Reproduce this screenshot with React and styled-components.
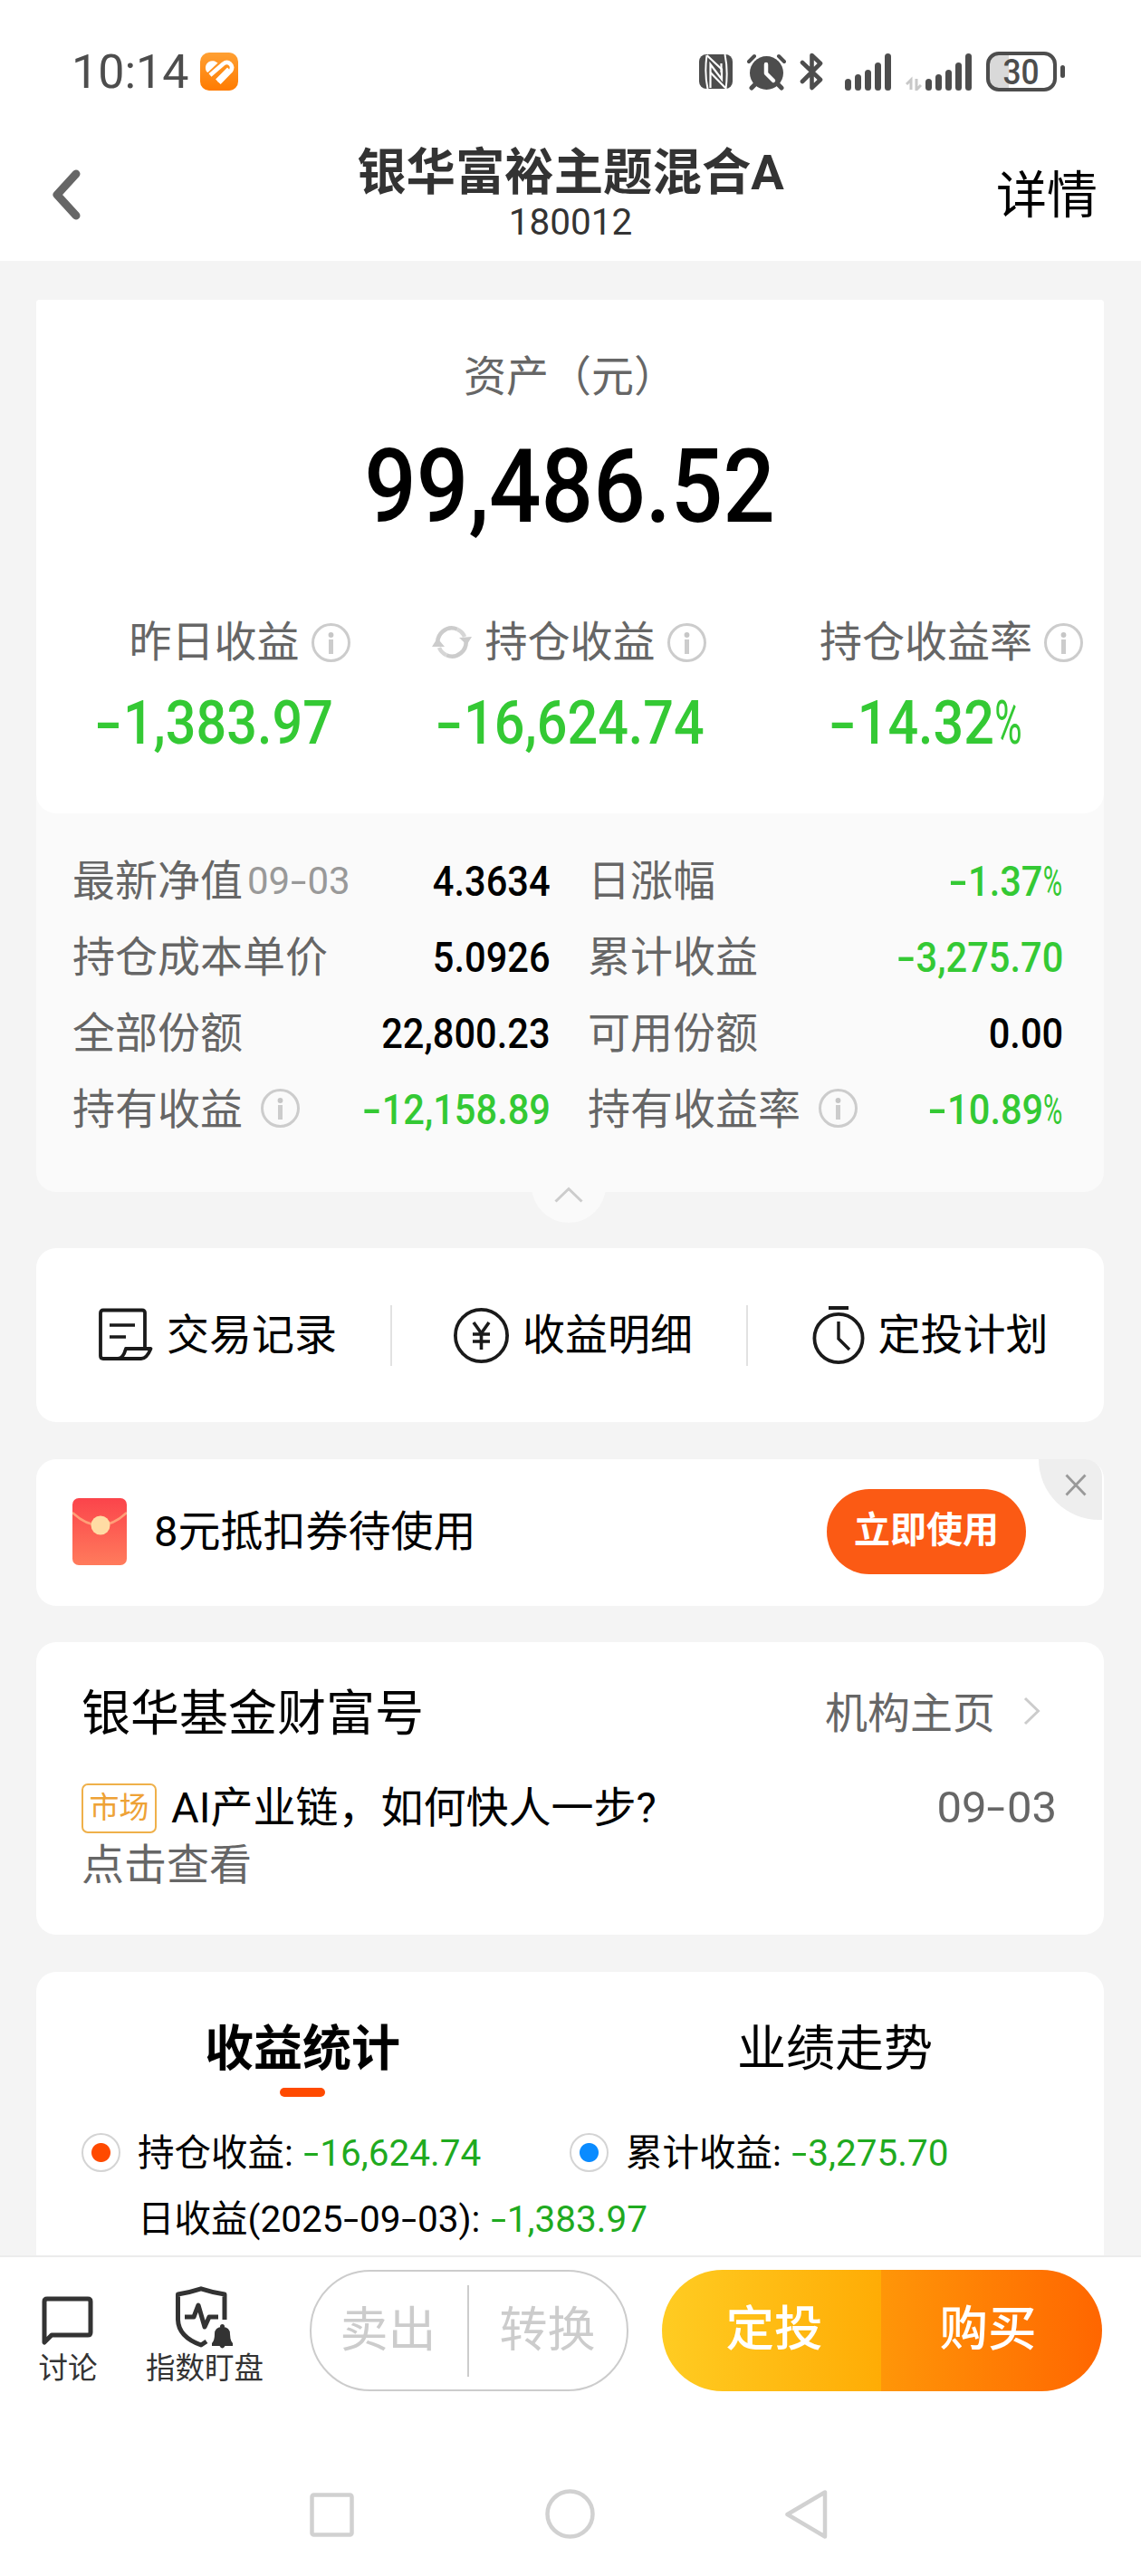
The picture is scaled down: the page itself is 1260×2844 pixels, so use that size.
import React from "react";
import styled, { createGlobalStyle } from "styled-components";

const GREEN = "#34c934";

const GlobalStyle = createGlobalStyle`
  * { box-sizing: border-box; }
  body {
    margin: 0;
    background: #f4f4f4;
    font-family: Roboto, "Noto Sans CJK SC", sans-serif;
    color: #000;
  }
  svg { display: block; flex: none; }
`;

const Phone = styled.div`
  width: 1260px;
  height: 2844px;
  display: flex;
  flex-direction: column;
  background: #f4f4f4;
  overflow: hidden;
`;

/* ---------- status bar and title ---------- */
const Header = styled.header`
  height: 288px;
  flex: none;
  background: #fff;
`;
const StatusBar = styled.div`
  height: 158px;
  padding: 0 84px 0 79px;
  display: flex;
  align-items: center;
  justify-content: space-between;
  color: #4d4d4d;
`;
const Clock = styled.div`
  display: flex;
  align-items: center;
  gap: 12px;
  font-size: 52px;
  line-height: 60px;
`;
const Time = styled.span`
  width: 130px;
  padding-top: 2px;
`;
const StatusIcons = styled.div`
  display: flex;
  align-items: center;
  height: 44px;
`;
const Gap = styled.span`
  width: ${(p) => p.$w}px;
  flex: none;
`;
const Battery = styled.div`
  width: 78px;
  height: 44px;
  border: 4px solid #4d4d4d;
  border-radius: 14px;
  background: linear-gradient(90deg, #d9d9d9 0 21px, #fff 21px);
  font-size: 38px;
  font-weight: 500;
  line-height: 38px;
  text-align: center;
`;
const BatteryTip = styled.span`
  width: 5px;
  height: 14px;
  margin-left: 4px;
  border-radius: 3px;
  background: #4d4d4d;
`;
const TitleBar = styled.div`
  height: 130px;
  padding: 0 48px;
  display: grid;
  grid-template-columns: 120px 1fr 120px;
  align-items: start;
`;
const TitleBlock = styled.div`
  padding-top: 3px;
  text-align: center;
  color: #333;
`;
const Title = styled.h1`
  margin: 0;
  font-size: 54.4px;
  line-height: 60px;
  font-weight: 700;
  white-space: nowrap;
`;
const Code = styled.div`
  font-size: 40.5px;
  line-height: 48px;
`;
const BackIcon = styled.div`
  padding: 29px 0 0 10px;
`;
const DetailLink = styled.div`
  padding-top: 26px;
  font-size: 56px;
  line-height: 64px;
  text-align: right;
`;

/* ---------- scrolling content ---------- */
const Content = styled.main`
  flex: 1;
  min-height: 0;
  padding: 43px 41px 0 40px;
  overflow: hidden;
`;
const Card = styled.section`
  height: ${(p) => p.$h}px;
  margin-top: ${(p) => p.$mt}px;
  border-radius: 22px;
  background: #fff;
`;
const AssetCard = styled.section`
  position: relative;
  height: 985px;
  border-radius: 4px 4px 22px 22px;
  background: #fafafa;
`;
const AssetTop = styled.div`
  height: 567px;
  padding-top: 52px;
  border-radius: 4px 4px 22px 22px;
  background: #fff;
`;
const AssetLabel = styled.div`
  font-size: 47px;
  line-height: 66px;
  text-align: center;
  color: #666;
`;
const Num = styled.span`
  display: inline-block;
  transform: scaleX(${(p) => p.$x || 0.885});
  transform-origin: ${(p) => p.$origin || "center"};
  white-space: nowrap;
`;
const Dash = styled.span`
  display: inline-block;
  transform: scaleX(1.5);
  margin: 0 0.1em 0 0.08em;
`;
const Percent = styled.span`
  display: inline-block;
  font-weight: 400;
  transform: scaleX(0.7);
  transform-origin: left;
  margin-right: -0.2em;
`;
const AssetValue = styled.div`
  height: 120px;
  margin-top: 29px;
  font-size: 113px;
  line-height: 120px;
  font-weight: 500;
  text-align: center;
`;
const Stats = styled.div`
  display: grid;
  grid-template-columns: repeat(3, 393px);
  margin-top: 78px;
`;
const Stat = styled.div`
  display: flex;
  flex-direction: column;
  align-items: center;
`;
const StatLabel = styled.div`
  display: flex;
  align-items: center;
  height: 66px;
  font-size: 47px;
  line-height: 66px;
  color: #666;
`;
const HangRight = styled.span`
  margin: 0 -56px -1px 13px;
`;
const HangLeft = styled.span`
  margin: 0 14px 0 -60px;
`;
const StatValue = styled.div`
  margin-top: 18px;
  height: 76px;
  font-size: 67px;
  line-height: 76px;
  font-weight: 500;
  color: ${GREEN};
`;
const Details = styled.div`
  display: grid;
  grid-template-columns: 528px 525px;
  column-gap: 41px;
  grid-auto-rows: 84px;
  padding: 33px 0 0 40px;
`;
const DetailRow = styled.div`
  display: flex;
  align-items: center;
  font-size: 47px;
  line-height: 66px;
  color: #666;
`;
const DetailDate = styled.span`
  margin-left: 5px;
  font-size: 42px;
  color: #999;
`;
const DetailInfo = styled.span`
  margin: -3px 0 0 20px;
`;
const DetailValue = styled.span`
  margin-left: auto;
  font-weight: 500;
  color: ${(p) => (p.$down ? GREEN : "#000")};
`;
const Collapse = styled.div`
  position: absolute;
  left: 547px;
  bottom: -34px;
  width: 82px;
  height: 82px;
  padding: 42px 0 0 25px;
  border-radius: 50%;
  background: #fafafa;
`;

/* ---------- action row ---------- */
const Actions = styled.div`
  height: 100%;
  display: grid;
  grid-template-columns: repeat(3, 393px);
  align-items: center;
`;
const Action = styled.div`
  height: 67px;
  padding-left: 9px;
  display: flex;
  align-items: center;
  justify-content: center;
  gap: 15px;
  font-size: 47px;
  line-height: 66px;
  border-right: ${(p) => (p.$last ? "0" : "2px solid #e2e2e2")};
`;

/* ---------- coupon ---------- */
const Coupon = styled.div`
  position: relative;
  height: 100%;
  padding: 0 86px 3px 40px;
  display: flex;
  align-items: center;
  font-size: 47px;
  line-height: 66px;
`;
const CouponText = styled.span`
  margin-left: 30px;
`;
const UseButton = styled.button`
  width: 220px;
  height: 94px;
  margin: 0 0 0 auto;
  padding: 0 0 2px;
  border: 0;
  border-radius: 47px;
  background: #fb5a14;
  color: #fff;
  font: 700 40px/60px Roboto, "Noto Sans CJK SC", sans-serif;
`;
const CloseCorner = styled.div`
  position: absolute;
  top: 0;
  right: 2px;
  width: 70px;
  height: 67px;
  padding: 16px 0 0 29px;
  border-radius: 0 20px 0 70px;
  background: #eee;
`;

/* ---------- institution ---------- */
const Institution = styled.div`
  padding: 37px 52px 0 50px;
`;
const InstHead = styled.div`
  display: flex;
  align-items: center;
  height: 74px;
  font-size: 54px;
`;
const InstLink = styled.span`
  margin-left: auto;
  display: flex;
  align-items: center;
  gap: 31px;
  padding-right: 18px;
  font-size: 47px;
  color: #666;
  svg { margin-top: 4px; }
`;
const News = styled.div`
  display: flex;
  align-items: center;
  height: 66px;
  margin-top: 39px;
  font-size: 47px;
  line-height: 66px;
`;
const Tag = styled.span`
  width: 83px;
  height: 55px;
  margin-right: 16px;
  border: 2px solid #efb04a;
  border-radius: 7px;
  font-size: 33px;
  line-height: 49px;
  text-align: center;
  color: #eea236;
`;
const NewsDate = styled.span`
  margin-left: auto;
  font-size: 49px;
  color: #666;
`;
const NewsMore = styled.div`
  font-size: 47px;
  line-height: 60px;
  color: #666;
`;

/* ---------- profit statistics ---------- */
const Tabs = styled.div`
  display: grid;
  grid-template-columns: 588px 588px;
  padding-top: 49px;
`;
const Tab = styled.div`
  display: flex;
  flex-direction: column;
  align-items: center;
  height: 89px;
  font-size: 54px;
  line-height: 74px;
  font-weight: ${(p) => (p.$active ? 700 : 400)};
  &::after {
    content: "";
    width: 50px;
    height: 10px;
    margin-top: 5px;
    border-radius: 5px;
    background: ${(p) => (p.$active ? "#ff4a00" : "transparent")};
  }
`;
const Legend = styled.div`
  display: grid;
  grid-template-columns: 539px 1fr;
  padding: 25px 0 0 50px;
`;
const LegendItem = styled.div`
  display: flex;
  align-items: center;
  height: 73px;
  font-size: 40.5px;
  line-height: 60px;
  white-space: nowrap;
`;
const Dot = styled.span`
  flex: none;
  width: 43px;
  height: 43px;
  margin-right: 19px;
  border: 2px solid #d4d4d4;
  border-radius: 50%;
  background: radial-gradient(circle, ${(p) => p.$c || "#fff"} 10px, #fff 11px);
  visibility: ${(p) => (p.$c ? "visible" : "hidden")};
`;
const LegendValue = styled.span`
  margin-left: 11px;
  color: #1faa1f;
`;

/* ---------- bottom ---------- */
const BottomBar = styled.footer`
  height: 210px;
  flex: none;
  display: flex;
  padding: 14px 43px 0 43px;
  border-top: 2px solid #ececec;
  background: #fff;
`;
const BottomItem = styled.div`
  width: ${(p) => p.$w}px;
  margin-right: ${(p) => p.$mr}px;
  height: 134px;
  display: flex;
  flex-direction: column;
  align-items: center;
  justify-content: flex-end;
  padding-bottom: 4px;
  font-size: 32.5px;
  line-height: 42px;
  white-space: nowrap;
  color: #333;
`;
const OutlinePill = styled.div`
  width: 352px;
  height: 134px;
  display: flex;
  align-items: center;
  border: 2px solid #ccc;
  border-radius: 67px;
  color: #ccc;
  font-size: 53px;
  line-height: 74px;
`;
const PillHalf = styled.span`
  width: ${(p) => p.$w}px;
  padding-right: ${(p) => p.$pr || 0}px;
  text-align: center;
`;
const PillRule = styled.span`
  width: 2px;
  height: 101px;
  background: #ccc;
`;
const BuyPill = styled.div`
  width: 486px;
  height: 134px;
  margin-left: 37px;
  display: flex;
  border-radius: 67px;
  overflow: hidden;
`;
const BuyHalf = styled.div`
  flex: 1;
  padding: ${(p) => p.$pad};
  display: flex;
  align-items: center;
  justify-content: center;
  font-size: 53.5px;
  font-weight: 500;
  line-height: 74px;
  color: #fff;
  background: linear-gradient(90deg, ${(p) => p.$from}, ${(p) => p.$to});
`;
const SystemNav = styled.nav`
  height: 144px;
  flex: none;
  padding: 48px 345px 0 342px;
  display: flex;
  justify-content: space-between;
  align-items: flex-start;
  background: #fff;
`;

/* ---------- icons ---------- */
const AppIcon = () => (
  <svg width="42" height="42" viewBox="0 0 42 42">
    <defs>
      <linearGradient id="app" x1="0" y1="0" x2="0" y2="1">
        <stop offset="0" stopColor="#ffa033" />
        <stop offset="1" stopColor="#ff7b00" />
      </linearGradient>
    </defs>
    <rect width="42" height="42" rx="10" fill="url(#app)" />
    <path d="M7 21C3.500 14 9 7.500 16 9.500L19.500 11.500L8.500 22Z" fill="#fff" />
    <path d="M11 25L25.500 12.500C31 8.500 37.500 14 34 20L21 33.500" stroke="#fff" strokeWidth="4.600" fill="none" />
    <path d="M14.500 28.500L29 15.500C30.500 14.500 31.500 16 30.500 17.500L18.500 29.500" stroke="#ff8f18" strokeWidth="1.500" fill="none" />
    <path d="M18.500 31L31.500 18" stroke="#fff" strokeWidth="4" />
  </svg>
);
const NfcIcon = () => (
  <svg width="38" height="38" viewBox="0 0 38 38">
    <rect width="37" height="38" rx="8" fill="#4d4d4d" />
    <path d="M9.500 38C7 27 7 12 8.500 1M28.500 0C31 12 31 27 29.500 38" stroke="#fff" strokeWidth="2" fill="none" />
    <path d="M12.500 37V11L25 27.500V16.500L8.500 1" stroke="#fff" strokeWidth="2.200" fill="none" />
    <path d="M12.500 20L29 37M24.500 10V20" stroke="#fff" strokeWidth="2.200" />
  </svg>
);
const AlarmIcon = () => (
  <svg width="43" height="41" viewBox="0 0 43 41" fill="none" strokeLinecap="round">
    <circle cx="21.500" cy="21.500" r="18.500" fill="#4d4d4d" />
    <path d="M2 9L8 3M41 9L35 3" stroke="#4d4d4d" strokeWidth="4" />
    <path d="M9 34L5 38M34 34L38 38" stroke="#4d4d4d" strokeWidth="5" />
    <path d="M21 12V22L29 30" stroke="#fff" strokeWidth="4.500" strokeLinejoin="round" />
  </svg>
);
const BluetoothIcon = () => (
  <svg width="26" height="42" viewBox="0 0 26 42">
    <path d="M3 11L23 30L13.500 39V3L23 12L3 32" fill="none" stroke="#4d4d4d" strokeWidth="4.600" strokeLinejoin="round" strokeLinecap="round" />
  </svg>
);
const Signal = () => (
  <svg width="51" height="41" viewBox="0 0 51 41" fill="#4d4d4d">
    {[13, 18, 23, 31, 41].map((h, i) => (
      <rect key={h} x={i * 11} y={41 - h} width="7" height={h} rx="3.500" />
    ))}
  </svg>
);
const DataArrows = () => (
  <svg width="18" height="42" viewBox="0 0 18 42">
    <path d="M1 35L6 30V41M17 36L12 41V29" stroke="#c8c8c8" strokeWidth="3" fill="none" />
  </svg>
);
const InfoIcon = () => (
  <svg width="43" height="43" viewBox="0 0 43 43">
    <circle cx="21.500" cy="21.500" r="20" fill="none" stroke="#ccc" strokeWidth="3" />
    <circle cx="21.500" cy="13" r="2.900" fill="#c6c6c6" />
    <rect x="19" y="18" width="5" height="16" fill="#ccc" />
  </svg>
);
const RefreshIcon = () => (
  <svg width="46" height="40" viewBox="0 0 46 40">
    <path d="M29 5.700A15.500 15.500 0 0 0 8 24M17 34.300A15.500 15.500 0 0 0 38 16" fill="none" stroke="#ccc" strokeWidth="4.500" />
    <path d="M29 5.700A15.500 15.500 0 0 1 37 14M17 34.300A15.500 15.500 0 0 1 9 26" fill="none" stroke="#d6d6d6" strokeWidth="4.500" />
    <path d="M1 25L7 15.500L15 25ZM31 15L45 14L39.500 23Z" fill="#ccc" />
  </svg>
);
const RecordIcon = () => (
  <svg width="61" height="60" viewBox="0 0 61 60" fill="none" stroke="#1a1a1a" strokeWidth="3.800" strokeLinejoin="round">
    <path d="M52 44V5Q52 2.500 49 2.500H6Q3 2.500 3 5.500V53Q3 56 6 56H48Q54 56 58.500 45H31Q28 56 22 56" />
    <path d="M13 19H41M13 32H31" strokeWidth="3.400" />
  </svg>
);
const YuanIcon = () => (
  <svg width="61" height="61" viewBox="0 0 61 61" fill="none" stroke="#1a1a1a">
    <circle cx="30.500" cy="30.500" r="28.600" strokeWidth="3.800" />
    <path d="M22 16L30.500 28L39 16M30.500 28V46M21 29H40M21 37H40" strokeWidth="3.600" />
  </svg>
);
const TimerIcon = () => (
  <svg width="58" height="64" viewBox="0 0 58 64" fill="none" stroke="#1a1a1a">
    <circle cx="29" cy="35.500" r="26.600" strokeWidth="3.800" />
    <path d="M18 2H40" strokeWidth="4" />
    <path d="M29 17V36L41 48" strokeWidth="3.400" />
  </svg>
);
const EnvelopeIcon = () => (
  <svg width="60" height="74" viewBox="0 0 60 74">
    <defs>
      <linearGradient id="env" x1="0" y1="0" x2="0" y2="1">
        <stop offset="0" stopColor="#fb444b" />
        <stop offset="1" stopColor="#ff7b5c" />
      </linearGradient>
    </defs>
    <rect width="60" height="74" rx="7" fill="url(#env)" />
    <path d="M0 16Q30 44 60 16" fill="none" stroke="#ff9f78" strokeWidth="2.500" />
    <circle cx="31" cy="30" r="10.500" fill="#ffdca4" />
  </svg>
);
const CommentIcon = () => (
  <svg width="60" height="60" viewBox="0 0 60 60">
    <path d="M4 52V7Q4 4 7 4H52Q55 4 55 7V41Q55 44 52 44H12Z" fill="none" stroke="#333" strokeWidth="5" strokeLinejoin="round" />
  </svg>
);
const ShieldIcon = () => (
  <svg width="64" height="70" viewBox="0 0 64 70" fill="none" stroke="#333">
    <path d="M54 37V9Q41 7 28 2.800Q15 7 2.500 9V37Q3 56 28 65L34 61" strokeWidth="5" strokeLinejoin="round" />
    <path d="M10 34H20L25 21L32 45L37 34H47" strokeWidth="5" strokeLinejoin="round" />
    <path d="M40 63Q43 60 43 53Q43 45 51.500 45Q60 45 60 53Q60 60 63 63V66H54.500Q51.500 71 48.500 66H40Z" fill="#333" stroke="none" />
    <circle cx="51.500" cy="44.500" r="2.500" fill="#333" stroke="none" />
  </svg>
);

/* Splits a figure so that its dash and percent sign get their own widths. */
const Figure = ({ value }) =>
  value.split(/([-%])/).map((part, i) => {
    if (part === "-") return <Dash key={i}>-</Dash>;
    if (part === "%") return <Percent key={i}>%</Percent>;
    return part;
  });

const stats = [
  { label: "昨日收益", value: "-1,383.97" },
  { label: "持仓收益", value: "-16,624.74", refresh: true },
  { label: "持仓收益率", value: "-14.32%" },
];

const details = [
  { label: "最新净值", date: "09-03", value: "4.3634" },
  { label: "日涨幅", value: "-1.37%" },
  { label: "持仓成本单价", value: "5.0926" },
  { label: "累计收益", value: "-3,275.70" },
  { label: "全部份额", value: "22,800.23" },
  { label: "可用份额", value: "0.00" },
  { label: "持有收益", info: true, value: "-12,158.89" },
  { label: "持有收益率", info: true, value: "-10.89%" },
];

export default function App() {
  return (
    <>
      <GlobalStyle />
      <Phone>
        <Header>
          <StatusBar>
            <Clock>
              <Time>10:14</Time>
              <AppIcon />
            </Clock>
            <StatusIcons>
              <NfcIcon />
              <Gap $w={15} />
              <AlarmIcon />
              <Gap $w={15} />
              <BluetoothIcon />
              <Gap $w={24} />
              <Signal />
              <Gap $w={16} />
              <DataArrows />
              <Gap $w={4} />
              <Signal />
              <Gap $w={16} />
              <Battery>
                <Num $x={0.93}>30</Num>
              </Battery>
              <BatteryTip />
            </StatusIcons>
          </StatusBar>
          <TitleBar>
            <BackIcon>
              <svg width="31" height="56" viewBox="0 0 31 56">
                <path d="M26 5L5 28L26 51" fill="none" stroke="#666" strokeWidth="9" strokeLinecap="round" strokeLinejoin="round" />
              </svg>
            </BackIcon>
            <TitleBlock>
              <Title>银华富裕主题混合A</Title>
              <Code>180012</Code>
            </TitleBlock>
            <DetailLink>详情</DetailLink>
          </TitleBar>
        </Header>

        <Content>
          <AssetCard>
            <AssetTop>
              <AssetLabel>资产（元）</AssetLabel>
              <AssetValue>
                <Num $x={0.896}>99,486.52</Num>
              </AssetValue>
              <Stats>
                {stats.map((s) => (
                  <Stat key={s.label}>
                    <StatLabel>
                      {s.refresh && (
                        <HangLeft>
                          <RefreshIcon />
                        </HangLeft>
                      )}
                      {s.label}
                      <HangRight>
                        <InfoIcon />
                      </HangRight>
                    </StatLabel>
                    <StatValue>
                      <Num>
                        <Figure value={s.value} />
                      </Num>
                    </StatValue>
                  </Stat>
                ))}
              </Stats>
            </AssetTop>
            <Details>
              {details.map((d) => (
                <DetailRow key={d.label}>
                  {d.label}
                  {d.date && (
                    <DetailDate>
                      <Figure value={d.date} />
                    </DetailDate>
                  )}
                  {d.info && (
                    <DetailInfo>
                      <InfoIcon />
                    </DetailInfo>
                  )}
                  <DetailValue $down={d.value.startsWith("-")}>
                    <Num $origin="right">
                      <Figure value={d.value} />
                    </Num>
                  </DetailValue>
                </DetailRow>
              ))}
            </Details>
            <Collapse>
              <svg width="32" height="18" viewBox="0 0 32 18">
                <path d="M1.500 16.500L16 2.500L30.500 16.500" fill="none" stroke="#ccc" strokeWidth="3" />
              </svg>
            </Collapse>
          </AssetCard>

          <Card $h={192} $mt={62}>
            <Actions>
              <Action>
                <RecordIcon />
                交易记录
              </Action>
              <Action>
                <YuanIcon />
                收益明细
              </Action>
              <Action $last>
                <TimerIcon />
                定投计划
              </Action>
            </Actions>
          </Card>

          <Card $h={162} $mt={41}>
            <Coupon>
              <EnvelopeIcon />
              <CouponText>8元抵扣券待使用</CouponText>
              <UseButton>立即使用</UseButton>
              <CloseCorner>
                <svg width="24" height="25" viewBox="0 0 24 25">
                  <path d="M1.500 1.500L22.500 23.500M22.500 1.500L1.500 23.500" stroke="#999" strokeWidth="2.800" />
                </svg>
              </CloseCorner>
            </Coupon>
          </Card>

          <Card $h={323} $mt={40}>
            <Institution>
              <InstHead>
                银华基金财富号
                <InstLink>
                  机构主页
                  <svg width="19" height="32" viewBox="0 0 19 32">
                    <path d="M2 2L16.500 16L2 30" fill="none" stroke="#ccc" strokeWidth="3" />
                  </svg>
                </InstLink>
              </InstHead>
              <News>
                <Tag>市场</Tag>
                AI产业链，如何快人一步?
                <NewsDate>
                  <Figure value="09-03" />
                </NewsDate>
              </News>
              <NewsMore>点击查看</NewsMore>
            </Institution>
          </Card>

          <Card $h={400} $mt={41}>
            <Tabs>
              <Tab $active>收益统计</Tab>
              <Tab>业绩走势</Tab>
            </Tabs>
            <Legend>
              <LegendItem>
                <Dot $c="#ff4a00" />
                持仓收益:
                <LegendValue>
                  <Figure value="-16,624.74" />
                </LegendValue>
              </LegendItem>
              <LegendItem>
                <Dot $c="#0a8bff" />
                累计收益:
                <LegendValue>
                  <Figure value="-3,275.70" />
                </LegendValue>
              </LegendItem>
              <LegendItem>
                <Dot />
                <span>
                  日收益(
                  <Figure value="2025-09-03" />
                  ):
                </span>
                <LegendValue>
                  <Figure value="-1,383.97" />
                </LegendValue>
              </LegendItem>
            </Legend>
          </Card>
        </Content>

        <BottomBar>
          <BottomItem $w={64} $mr={54}>
            <CommentIcon />
            讨论
          </BottomItem>
          <BottomItem $w={130} $mr={51}>
            <ShieldIcon />
            指数盯盘
          </BottomItem>
          <OutlinePill>
            <PillHalf $w={172} $pr={3}>卖出</PillHalf>
            <PillRule />
            <PillHalf $w={174} $pr={1}>转换</PillHalf>
          </OutlinePill>
          <BuyPill>
            <BuyHalf $from="#ffcc22" $to="#ffac05" $pad="0 0 2px 6px">定投</BuyHalf>
            <BuyHalf $from="#ff9608" $to="#ff6600" $pad="0 8px 2px 0">购买</BuyHalf>
          </BuyPill>
        </BottomBar>
        <SystemNav>
          <svg width="50" height="55" viewBox="0 0 50 55">
            <rect x="2.500" y="6.500" width="44" height="44" rx="2" fill="none" stroke="#d1d1d1" strokeWidth="4.500" />
          </svg>
          <svg width="56" height="56" viewBox="0 0 56 56">
            <circle cx="28.500" cy="27.500" r="25" fill="none" stroke="#d1d1d1" strokeWidth="4.500" />
          </svg>
          <svg width="50" height="56" viewBox="0 0 50 56">
            <path d="M46 3.500V52.500L4.500 28Z" fill="none" stroke="#d1d1d1" strokeWidth="4.500" strokeLinejoin="round" />
          </svg>
        </SystemNav>
      </Phone>
    </>
  );
}
